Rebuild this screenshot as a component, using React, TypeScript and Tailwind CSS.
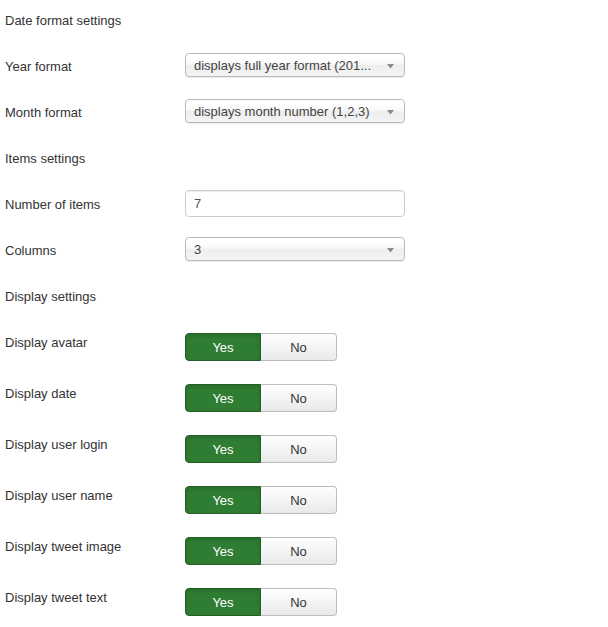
import React from "react";

const font = { fontFamily: '"Liberation Sans", Arial, sans-serif' };

function Arrow() {
  return (
    <svg width="7" height="5" viewBox="0 0 7 5" className="absolute right-[10px] top-[10px]">
      <path d="M0 0 L7 0 L3.5 4.5 Z" fill="#8a8a8a" />
    </svg>
  );
}

function Select({ value }: { value: string }) {
  return (
    <div className="relative mt-[7px] h-[24px] w-[220px] rounded-[4px] border border-[#b9b9b9] bg-[linear-gradient(#ffffff_20%,#f6f6f6_50%,#eeeeee_52%,#f4f4f4_100%)] pl-[8px] text-[13px] leading-[23px] text-[#444] shadow-[0_1px_1px_rgba(0,0,0,0.08)]">
      <span className="whitespace-nowrap">{value}</span>
      <Arrow />
    </div>
  );
}

function Input({ value }: { value: string }) {
  return (
    <div className="mt-[6px] h-[27px] w-[220px] rounded-[4px] border border-[#cccccc] bg-white pl-[8px] text-[13px] leading-[26px] text-[#555] shadow-[inset_0_1px_1px_rgba(0,0,0,0.075)]">
      {value}
    </div>
  );
}

function Toggle() {
  return (
    <div className="mt-[11px] flex h-[28px] w-[152px]">
      <div className="flex h-full w-[76px] items-center justify-center rounded-l-[4px] border border-[#245e27] bg-[#2f7d32] pt-[2px] text-[13px] text-white shadow-[inset_0_2px_4px_rgba(0,0,0,0.15)]">
        Yes
      </div>
      <div className="flex h-full w-[76px] items-center justify-center rounded-r-[4px] border border-l-0 border-[#bdbdbd] bg-[linear-gradient(#ffffff,#e9e9e9)] pt-[2px] text-[13px] text-[#333]">
        No
      </div>
    </div>
  );
}

function Row({
  label,
  h,
  children,
}: {
  label: string;
  h: number;
  children?: React.ReactNode;
}) {
  return (
    <div className="flex items-start" style={{ height: h }}>
      <div className="mt-[12px] h-[18px] w-[180px] shrink-0 text-[13px] leading-[18px] text-[#333]">{label}</div>
      <div className="-mt-0">{children}</div>
    </div>
  );
}

export default function App() {
  const toggles = [
    "Display avatar",
    "Display date",
    "Display user login",
    "Display user name",
    "Display tweet image",
    "Display tweet text",
  ];
  return (
    <div className="min-h-[627px] w-[608px] bg-white pl-[5px]" style={font}>
      <Row label="Date format settings" h={46} />
      <Row label="Year format" h={46}>
        <Select value="displays full year format (201..." />
      </Row>
      <Row label="Month format" h={46}>
        <Select value="displays month number (1,2,3)" />
      </Row>
      <Row label="Items settings" h={46} />
      <Row label="Number of items" h={46}>
        <Input value="7" />
      </Row>
      <Row label="Columns" h={46}>
        <Select value="3" />
      </Row>
      <Row label="Display settings" h={46} />
      {toggles.map((t) => (
        <Row key={t} label={t} h={51}>
          <Toggle />
        </Row>
      ))}
    </div>
  );
}
